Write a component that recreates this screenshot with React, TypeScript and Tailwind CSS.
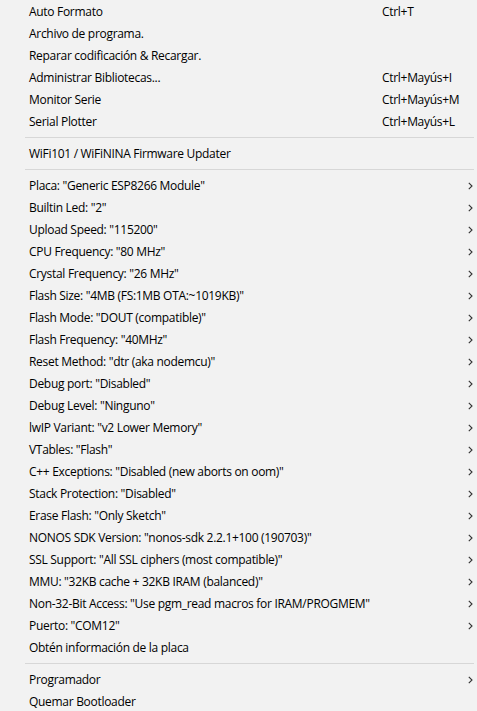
const groups: { label: string; shortcut?: string; sub?: boolean }[][] = [
  [
    { label: "Auto Formato", shortcut: "Ctrl+T" },
    { label: "Archivo de programa." },
    { label: "Reparar codificación & Recargar." },
    { label: "Administrar Bibliotecas...", shortcut: "Ctrl+Mayús+I" },
    { label: "Monitor Serie", shortcut: "Ctrl+Mayús+M" },
    { label: "Serial Plotter", shortcut: "Ctrl+Mayús+L" },
  ],
  [{ label: "WiFi101 / WiFiNINA Firmware Updater" }],
  [
    { label: 'Placa: "Generic ESP8266 Module"', sub: true },
    { label: 'Builtin Led: "2"', sub: true },
    { label: 'Upload Speed: "115200"', sub: true },
    { label: 'CPU Frequency: "80 MHz"', sub: true },
    { label: 'Crystal Frequency: "26 MHz"', sub: true },
    { label: 'Flash Size: "4MB (FS:1MB OTA:~1019KB)"', sub: true },
    { label: 'Flash Mode: "DOUT (compatible)"', sub: true },
    { label: 'Flash Frequency: "40MHz"', sub: true },
    { label: 'Reset Method: "dtr (aka nodemcu)"', sub: true },
    { label: 'Debug port: "Disabled"', sub: true },
    { label: 'Debug Level: "Ninguno"', sub: true },
    { label: 'lwIP Variant: "v2 Lower Memory"', sub: true },
    { label: 'VTables: "Flash"', sub: true },
    { label: 'C++ Exceptions: "Disabled (new aborts on oom)"', sub: true },
    { label: 'Stack Protection: "Disabled"', sub: true },
    { label: 'Erase Flash: "Only Sketch"', sub: true },
    { label: 'NONOS SDK Version: "nonos-sdk 2.2.1+100 (190703)"', sub: true },
    { label: 'SSL Support: "All SSL ciphers (most compatible)"', sub: true },
    { label: 'MMU: "32KB cache + 32KB IRAM (balanced)"', sub: true },
    { label: 'Non-32-Bit Access: "Use pgm_read macros for IRAM/PROGMEM"', sub: true },
    { label: 'Puerto: "COM12"', sub: true },
    { label: "Obtén información de la placa" },
  ],
  [
    { label: "Programador", sub: true },
    { label: "Quemar Bootloader" },
  ],
];

function Chevron() {
  return (
    <svg width="5" height="8" viewBox="0 0 5 8" className="shrink-0">
      <path d="M0.8 0.8 L4 4 L0.8 7.2" fill="none" stroke="#333" strokeWidth="1.1" />
    </svg>
  );
}

export default function App() {
  return (
    <div
      className="w-[477px] h-[711px] overflow-hidden bg-[#f2f2f2] text-[12px] tracking-[-0.3px] text-black"
      style={{ fontFamily: '"Open Sans", "Noto Sans", sans-serif' }}
    >
      {groups.map((g, gi) => (
        <div key={gi}>
          {gi > 0 && (
            <div className="h-[10px] flex items-center pl-[25px] pr-[3px]">
              <div className="h-px w-full bg-[#d7d7d7]" />
            </div>
          )}
          {g.map((it) => (
            <div key={it.label} className="h-[22px] flex items-center pl-[29px] pr-[4px] pt-px">
              <span className="w-[353px] shrink-0 whitespace-nowrap">{it.label}</span>
              <span className="flex-1 whitespace-nowrap">{it.shortcut}</span>
              {it.sub && <Chevron />}
            </div>
          ))}
        </div>
      ))}
    </div>
  );
}
